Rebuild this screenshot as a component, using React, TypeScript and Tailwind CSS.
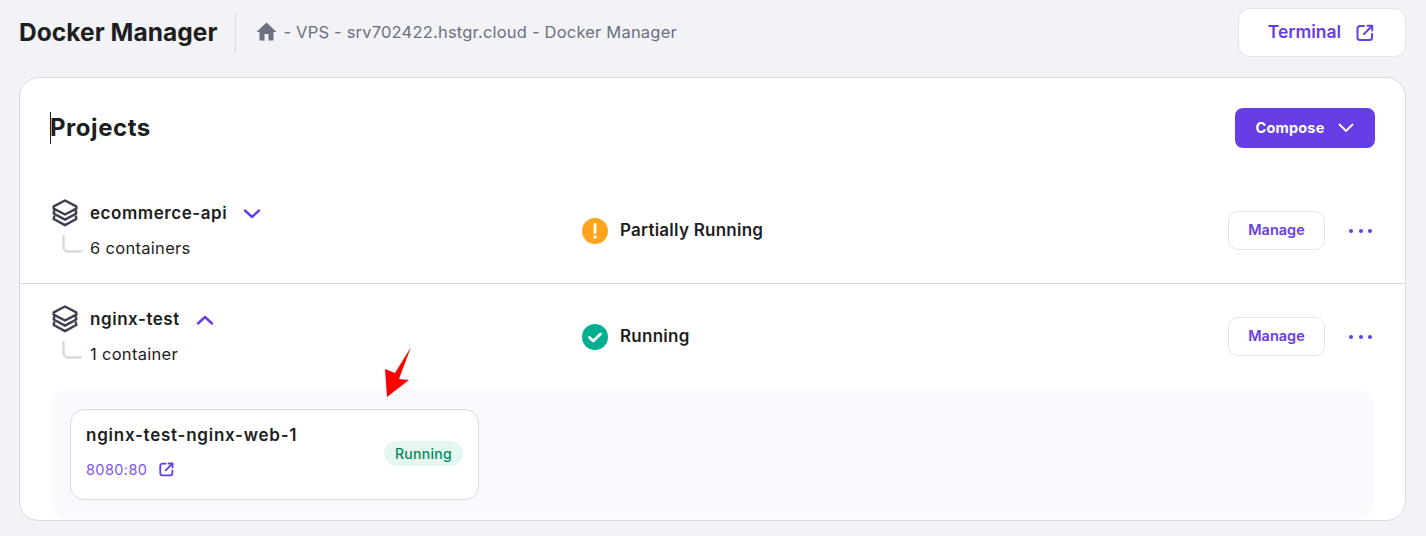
import React from "react";

const Ext = ({ s = 18, w = 2 }: { s?: number; w?: number }) => (
  <svg width={s} height={s} viewBox="0 0 18 18" fill="none" stroke="#673de6" strokeWidth={w} strokeLinecap="round" strokeLinejoin="round">
    <path d="M8 2H4a2.5 2.5 0 0 0-2.5 2.5v9A2.5 2.5 0 0 0 4 16h9.5a2.5 2.5 0 0 0 2.5-2.5V10" />
    <path d="M11.5 1.8H16.2V6.5" />
    <path d="M16 2L8 10" />
  </svg>
);

const Stack = () => (
  <svg width="26" height="28" viewBox="0 0 26 28" fill="none" stroke="#3d4050" strokeWidth="2.5" strokeLinejoin="round" strokeLinecap="round">
    <path d="M13 1.5L24.3 7.3V9.7L13 15.5L1.7 9.7V7.3Z" />
    <path d="M2.2 12L1.7 14.5L13 20.7L24.3 14.5L23.8 12" />
    <path d="M2.2 17.5L1.7 20L13 26.2L24.3 20L23.8 17.5" />
  </svg>
);

const Chevron = ({ up }: { up?: boolean }) => (
  <svg width="18" height="10" viewBox="0 0 18 10" fill="none" stroke="#673de6" strokeWidth="2.4" strokeLinecap="round" strokeLinejoin="round">
    <path d={up ? "M2 8.5L9 2L16 8.5" : "M2 1.5L9 8L16 1.5"} />
  </svg>
);

const Elbow = () => (
  <svg className="mb-[9px]" width="20" height="18" viewBox="0 0 20 18" fill="none" stroke="#d8dae0" strokeWidth="2.4" strokeLinecap="round">
    <path d="M1.5 1V12a4.5 4.5 0 0 0 4.5 4.5H19" />
  </svg>
);

const Row = ({
  name,
  sub,
  up,
  status,
  warn,
  border,
}: {
  name: string;
  sub: string;
  up?: boolean;
  status: string;
  warn?: boolean;
  border?: boolean;
}) => (
  <div className={`flex items-center pl-[32px] pr-[30px] ${border ? "h-[106px] border-b border-[#d8dae0]" : "h-[105px]"}`}>
    <div className="mb-[4px] w-[530px]">
      <div className="flex h-[28px] items-center">
        <Stack />
        <span className="ml-[12px] mt-[2px] text-[17px] font-semibold tracking-[0.55px] text-[#1d1e20]">{name}</span>
        <span className="ml-[16px] mt-[2px] flex"><Chevron up={up} /></span>
      </div>
      <div className="mt-[11px] flex h-[20px] items-center pl-[10px]">
        <Elbow />
        <span className="ml-[8px] text-[16.5px] tracking-[0.3px] text-[#1d1e20]">{sub}</span>
      </div>
    </div>
    <div className="flex items-center">
      {warn ? (
        <svg width="26" height="26" viewBox="0 0 26 26">
          <circle cx="13" cy="13" r="13" fill="#ffa41c" />
          <path d="M13 6.5V14.5" stroke="#fff" strokeWidth="2.8" strokeLinecap="round" />
          <circle cx="13" cy="19" r="1.7" fill="#fff" />
        </svg>
      ) : (
        <svg width="26" height="26" viewBox="0 0 26 26">
          <circle cx="13" cy="13" r="13" fill="#00b090" />
          <path d="M7.5 13.5L11.2 17L18.5 10" fill="none" stroke="#fff" strokeWidth="2.8" strokeLinecap="round" strokeLinejoin="round" />
        </svg>
      )}
      <span className="ml-[12px] text-[17px] font-semibold tracking-[0.25px] text-[#1d1e20]">{status}</span>
    </div>
    <button className="ml-auto flex h-[39px] w-[97px] items-center justify-center rounded-[10px] border border-[#e3e4e8] bg-white pb-[1px] text-[14.5px] font-semibold text-[#673de6]">
      Manage
    </button>
    <div className="ml-[24px] mr-[3px] flex w-[23px] justify-between">
      <span className="h-[4px] w-[4px] rounded-full bg-[#673de6]" />
      <span className="h-[4px] w-[4px] rounded-full bg-[#673de6]" />
      <span className="h-[4px] w-[4px] rounded-full bg-[#673de6]" />
    </div>
  </div>
);

export default function App() {
  return (
    <div className="relative h-[536px] w-[1426px] overflow-hidden bg-[#f2f3f6] pl-[19px] pr-[20px] pt-[8px] font-['Inter',sans-serif]">
      <header className="flex h-[49px] items-center">
        <h1 className="mb-[1px] text-[24.5px] font-bold tracking-[0.05px] text-[#1d1e20]">Docker Manager</h1>
        <div className="ml-[18px] h-[40px] w-px bg-[#d8dae0]" />
        <svg className="ml-[20px] mb-[3px]" width="21" height="19" viewBox="0 0 21 19" fill="#6d7081">
          <path d="M10.5 0.5L20.5 10H17.5V18.5H12.5V12H8.5V18.5H3.5V10H0.5Z" />
        </svg>
        <span className="ml-[6px] text-[16.5px] tracking-[0.2px] text-[#6d7081]">- VPS - srv702422.hstgr.cloud - Docker Manager</span>
        <button className="ml-auto flex h-[49px] w-[168px] items-center justify-center gap-[15px] rounded-[12px] border border-[#e3e4e8] bg-white pr-[2px] text-[17.5px] font-semibold text-[#673de6]">
          Terminal
          <Ext />
        </button>
      </header>

      <main className="mt-[20px] h-[444px] rounded-[20px] border border-[#d8dae0] bg-white pt-[30px]">
        <div className="flex h-[40px] items-center justify-between pl-[30px] pr-[30px]">
          <h2 className="relative text-[24px] font-bold leading-[32px] tracking-[0.55px] text-[#1d1e20]">
            <span className="absolute left-0 top-0 h-[32px] w-px bg-[#1d1e20]" />
            Projects
          </h2>
          <button className="flex h-[40px] w-[140px] items-center justify-center gap-[13px] rounded-[8px] bg-[#673de6] pr-[1px] text-[14.5px] font-bold tracking-[0.2px] text-white">
            Compose
            <svg width="16" height="10" viewBox="0 0 16 10" fill="none" stroke="#fff" strokeWidth="1.8" strokeLinecap="round" strokeLinejoin="round">
              <path d="M1.5 1.5L8 8L14.5 1.5" />
            </svg>
          </button>
        </div>

        <div className="mt-[30px]">
          <Row name="ecommerce-api" sub="6 containers" status="Partially Running" warn border />
          <Row name="nginx-test" sub="1 container" status="Running" up />
        </div>

        <div className="ml-[31px] mr-[31px] mt-[1px] h-[129px] rounded-[16px] bg-[#f9fafe] pl-[19px] pt-[19px]">
          <div className="flex h-[91px] w-[409px] items-center justify-between rounded-[14px] border border-[#d8dae0] bg-white pl-[15px] pr-[15px]">
            <div className="mb-[6px]">
              <div className="text-[17px] font-semibold leading-[22px] tracking-[0.75px] text-[#1d1e20]">nginx-test-nginx-web-1</div>
              <div className="mt-[14px] flex items-center gap-[12px] text-[14.5px] leading-[20px] tracking-[0.4px] text-[#7c56ec]">
                8080:80
                <Ext s={15} w={2.2} />
              </div>
            </div>
            <span className="mb-[2px] flex h-[25px] w-[79px] items-center justify-center rounded-full bg-[#e5f5ef] text-[14px] font-medium tracking-[0.3px] text-[#008a5c]">
              Running
            </span>
          </div>
        </div>
      </main>

      <svg className="absolute left-[380px] top-[341px]" width="36" height="60" viewBox="0 0 36 60" fill="#ff0000">
        <path d="M31 6L15 32L5 28L7 56L29 39L19 38Z" />
      </svg>
    </div>
  );
}
